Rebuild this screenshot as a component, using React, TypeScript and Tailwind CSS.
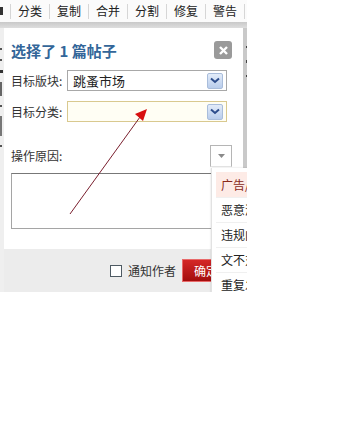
import React from 'react';

const font = { fontFamily: '"Noto Sans CJK SC", "Noto Sans", sans-serif' };

const tools = ['分类', '复制', '合并', '分割', '修复', '警告'];
const reasons = ['广告/SPAM', '恶意灌水', '违规内容', '文不对题', '重复发帖'];

function BlueArrow() {
  return (
    <div className="w-[16px] h-[16px] rounded-[2px] border border-[#a9bddb] bg-gradient-to-b from-[#e3ecf9] to-[#b9cdec] flex items-center justify-center">
      <svg width="10" height="7" viewBox="0 0 10 7">
        <path d="M1 1.5 L5 5 L9 1.5" fill="none" stroke="#2d4d8c" strokeWidth="2" />
      </svg>
    </div>
  );
}

function Select({ value, focus }: { value?: string; focus?: boolean }) {
  return (
    <div
      className={
        'w-[160px] h-[21px] flex items-center justify-between pl-[5px] pr-[3px] border ' +
        (focus ? 'border-[#d9c98f] bg-[#fffef4]' : 'border-[#a8a8a8] bg-white')
      }
    >
      <span className="text-[13px] text-[#222] leading-none">{value}</span>
      <BlueArrow />
    </div>
  );
}

export default function App() {
  return (
    <div className="w-[351px] h-[448px] bg-white" style={font}>
      <div className="relative w-[247px] h-[292px] overflow-hidden">
        {/* toolbar */}
        <div className="h-[22px] flex items-center bg-[#fbfbfb] text-[12px] text-[#222]">
          <span className="w-[3px] h-[8px] bg-[#333] mr-[7px]" />
          {tools.map((t) => (
            <div key={t} className="flex items-center">
              <span className="w-px h-[15px] bg-[#d6d6d6]" />
              <span className="w-[38px] text-center leading-none">{t}</span>
            </div>
          ))}
          <span className="w-px h-[15px] bg-[#d6d6d6]" />
        </div>
        <div className="h-[6px] bg-gradient-to-b from-[#c9c9c9] to-[#dedede]" />

        <div className="flex h-[264px]">
          <div className="w-[4px] bg-[#efefef] flex flex-col gap-[9px] pt-[20px]">
            <span className="w-[2px] h-[2px] bg-[#555]" />
            <span className="w-[2px] h-[2px] bg-[#555]" />
            <span className="w-[3px] h-[3px] bg-[#333]" />
            <span className="w-[2px] h-[14px] bg-[#666]" />
            <span className="w-[2px] h-[2px] bg-[#555]" />
            <span className="w-[2px] h-[20px] bg-[#777]" />
            <span className="w-[2px] h-[2px] bg-[#555]" />
          </div>

          {/* dialog */}
          <div className="w-[239px] bg-white flex flex-col">
            <div className="flex items-center justify-between pl-[7px] pr-[11px] pt-[13px]">
              <span className="text-[15px] font-bold text-[#336699] leading-none">选择了 1 篇帖子</span>
              <div className="w-[18px] h-[18px] rounded-[3px] bg-[#9a9a9a] flex items-center justify-center">
                <svg width="9" height="9" viewBox="0 0 9 9">
                  <path d="M1 1 L8 8 M8 1 L1 8" stroke="#fff" strokeWidth="2.4" />
                </svg>
              </div>
            </div>

            <div className="flex items-center pl-[7px] mt-[11px]">
              <span className="w-[56px] text-[12px] text-[#333] leading-none">目标版块:</span>
              <Select value="跳蚤市场" />
            </div>
            <div className="flex items-center pl-[7px] mt-[10px]">
              <span className="w-[56px] text-[12px] text-[#333] leading-none">目标分类:</span>
              <Select focus />
            </div>

            <div className="flex items-center justify-between pl-[7px] pr-[11px] mt-[23px]">
              <span className="text-[12px] text-[#333] leading-none">操作原因:</span>
              <div className="w-[22px] h-[22px] border border-[#b5b5b5] border-b-[#e4e4e4] bg-white flex items-center justify-center">
                <svg width="7" height="4" viewBox="0 0 7 4">
                  <path d="M0 0 L7 0 L3.5 4 Z" fill="#8a8a8a" />
                </svg>
              </div>
            </div>

            <div className="mx-[7px] mt-[6px] h-[56px] border border-[#a5a5a5] border-t-[#777] bg-white" />

            <div className="mt-[20px] flex-1 bg-[#ececec] flex items-center justify-end pr-[13px]">
              <span className="w-[12px] h-[12px] border border-[#4e5a63] bg-white mr-[6px]" />
              <span className="text-[12px] text-[#333] leading-none mr-[6px]">通知作者</span>
              <span className="h-[23px] px-[11px] flex items-center text-[12px] text-white bg-gradient-to-b from-[#d52727] to-[#a30d0d] border border-[#e86a6a] leading-none">
                确定
              </span>
            </div>
          </div>

          <div className="w-[4px] bg-[#c9c9c9] flex flex-col gap-[12px] pt-[18px] items-end">
            <span className="w-[1px] h-[2px] bg-[#444]" />
            <span className="w-[1px] h-[3px] bg-[#444]" />
            <span className="w-[1px] h-[2px] bg-[#444]" />
          </div>
        </div>

        {/* reason menu */}
        <div className="absolute left-[211px] top-[168px] w-[90px] h-[130px] bg-white border-l border-[#e2e2e2] shadow-[0_0_2px_rgba(0,0,0,0.15)] pl-[4px] pt-[4px]">
          {reasons.map((r, i) => (
            <div
              key={r}
              className={
                'h-[25px] flex items-center pl-[5px] text-[12px] leading-none whitespace-nowrap ' +
                (i === 0 ? 'bg-[#fdebe6] text-[#8a2a1a]' : 'text-[#222] border-t border-[#f0f0f0]')
              }
            >
              {r}
            </div>
          ))}
        </div>

        {/* annotation arrow */}
        <svg className="absolute left-0 top-0" width="247" height="292" viewBox="0 0 247 292">
          <line x1="70" y1="214" x2="140" y2="117" stroke="#7a1f2e" strokeWidth="1" />
          <path d="M147 109 L135 114 L143 121 Z" fill="#d81010" />
        </svg>
      </div>
    </div>
  );
}
